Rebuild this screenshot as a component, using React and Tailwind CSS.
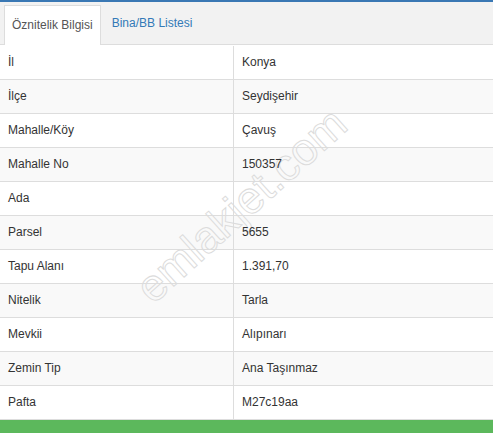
import React from "react";

const rows = [
  ["İl", "Konya"],
  ["İlçe", "Seydişehir"],
  ["Mahalle/Köy", "Çavuş"],
  ["Mahalle No", "150357"],
  ["Ada", ""],
  ["Parsel", "5655"],
  ["Tapu Alanı", "1.391,70"],
  ["Nitelik", "Tarla"],
  ["Mevkii", "Alıpınarı"],
  ["Zemin Tip", "Ana Taşınmaz"],
  ["Pafta", "M27c19aa"],
];

export default function App() {
  return (
    <div className="relative w-[493px] h-[433px] overflow-hidden bg-white text-[12px] text-[#333] font-['Liberation_Sans',Arial,sans-serif]">
      <div className="h-[2px] bg-[#3a78b4]" />
      <div className="h-[43px] bg-[#f2f2f2] border-b border-[#dddddd] flex items-end pl-[4px]">
        <div className="h-[40px] -mb-px bg-white border border-b-0 border-[#dddddd] px-[7px] pt-[10px] text-[#555]">
          Öznitelik Bilgisi
        </div>
        <div className="h-[40px] px-[11px] pt-[10px] text-[#337ab7]">
          Bina/BB Listesi
        </div>
      </div>
      <div className="pt-px">
        {rows.map(([k, v], i) => (
          <div
            key={k}
            className={`flex h-[34px] border-b border-[#dddddd] ${i % 2 === 1 ? "bg-[#f9f9f9]" : "bg-white"}`}
          >
            <div className="w-[234px] border-r border-[#dddddd] pl-[8px] pb-[2px] flex items-center">
              <span className="relative z-[2]">{k}</span>
            </div>
            <div className="flex-1 pl-[8px] pb-[2px] flex items-center">
              <span className="relative z-[2]">{v}</span>
            </div>
          </div>
        ))}
      </div>
      <div className="h-[14px] bg-[#5cb85c]" />
      <div className="pointer-events-none absolute z-[1] left-[241px] top-[205px] -translate-x-1/2 -translate-y-1/2 -rotate-[42deg] whitespace-nowrap text-[45px] leading-none text-transparent [-webkit-text-stroke:1px_#dcdcdc]">
        emlakjet.com
      </div>
    </div>
  );
}
